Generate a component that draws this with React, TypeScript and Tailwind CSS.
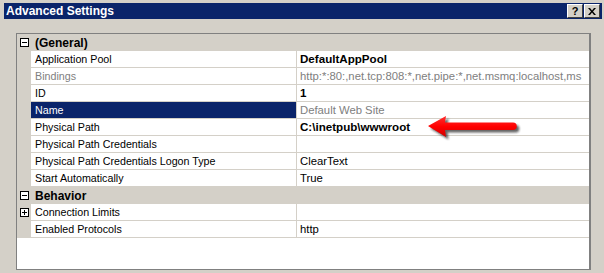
import React from 'react';

type Row = {
    kind: 'cat' | 'prop';
    label: string;
    value?: string;
    bold?: boolean;
    dim?: boolean;
    selected?: boolean;
    expander?: 'minus' | 'plus';
};

const rows: Row[] = [
    { kind: 'cat', label: '(General)', expander: 'minus' },
    { kind: 'prop', label: 'Application Pool', value: 'DefaultAppPool', bold: true },
    { kind: 'prop', label: 'Bindings', value: 'http:*:80:,net.tcp:808:*,net.pipe:*,net.msmq:localhost,ms', dim: true },
    { kind: 'prop', label: 'ID', value: '1', bold: true },
    { kind: 'prop', label: 'Name', value: 'Default Web Site', selected: true },
    { kind: 'prop', label: 'Physical Path', value: 'C:\\inetpub\\wwwroot', bold: true },
    { kind: 'prop', label: 'Physical Path Credentials', value: '' },
    { kind: 'prop', label: 'Physical Path Credentials Logon Type', value: 'ClearText' },
    { kind: 'prop', label: 'Start Automatically', value: 'True' },
    { kind: 'cat', label: 'Behavior', expander: 'minus' },
    { kind: 'prop', label: 'Connection Limits', value: '', expander: 'plus' },
    { kind: 'prop', label: 'Enabled Protocols', value: 'http' },
];

function Expander({ type }: { type: 'minus' | 'plus' }) {
    return (
        <svg width="9" height="9" viewBox="0 0 9 9" className="block">
            <rect x="0.5" y="0.5" width="8" height="8" fill="white" stroke="#000" />
            <line x1="2" y1="4.5" x2="7" y2="4.5" stroke="#000" />
            {type === 'plus' && <line x1="4.5" y1="2" x2="4.5" y2="7" stroke="#000" />}
        </svg>
    );
}

function CaptionButton({ children }: { children: React.ReactNode }) {
    return (
        <div className="w-[16px] h-[14px] bg-[#d4d0c8] border border-t-white border-l-white border-r-[#404040] border-b-[#404040] flex items-center justify-center text-[11px] font-bold text-black leading-none">
            {children}
        </div>
    );
}

export default function App() {
    return (
        <div
            className="relative w-[604px] h-[273px] bg-[#d4d0c8] overflow-hidden text-[11px] text-black"
            style={{ fontFamily: '"Liberation Sans", Arial, sans-serif' }}
        >
            {/* Title bar */}
            <div className="ml-[4px] mr-[2px] mt-[3px] h-[16px] bg-[#0a246a] flex items-center justify-between pl-[2px] pr-[2px]">
                <span className="text-white font-bold text-[12px] leading-none">Advanced Settings</span>
                <div className="flex gap-[1px]">
                    <CaptionButton>?</CaptionButton>
                    <CaptionButton>
                        <svg width="8" height="7" viewBox="0 0 8 7">
                            <path d="M0 0 L2 0 L4 2.5 L6 0 L8 0 L5 3.5 L8 7 L6 7 L4 4.5 L2 7 L0 7 L3 3.5 Z" fill="#000" />
                        </svg>
                    </CaptionButton>
                </div>
            </div>

            {/* Property grid */}
            <div className="ml-[16px] mt-[14px] w-[575px] h-[237px] bg-white border border-[#808080] border-r-2 overflow-hidden">
                {rows.map((r, i) =>
                    r.kind === 'cat' ? (
                        <div key={i} className="flex h-[17px] bg-[#d4d0c8]">
                            <div className="w-[14px] flex items-center justify-center shrink-0">
                                <Expander type={r.expander!} />
                            </div>
                            <div className="pl-[4px] font-bold text-[12px] flex items-center">{r.label}</div>
                        </div>
                    ) : (
                        <div key={i} className="flex h-[17px]">
                            <div className="w-[14px] bg-[#d4d0c8] flex items-center justify-center shrink-0">
                                {r.expander && <Expander type={r.expander} />}
                            </div>
                            <div
                                className={`w-[266px] shrink-0 pl-[4px] flex items-center border-b border-r border-[#d4d0c8] whitespace-nowrap text-[10.7px] ${
                                    r.selected ? 'bg-[#0a246a] text-white' : r.dim ? 'text-[#808080]' : ''
                                }`}
                            >
                                {r.label}
                            </div>
                            <div
                                className={`flex-1 min-w-0 pl-[3px] flex items-center border-b border-[#d4d0c8] whitespace-nowrap overflow-hidden ${
                                    r.bold ? 'font-bold text-[11.6px]' : 'text-[11.3px]'
                                } ${r.dim || r.selected ? 'text-[#808080]' : ''}`}
                            >
                                {r.value}
                            </div>
                        </div>
                    )
                )}
            </div>

            {/* Red arrow annotation */}
            <svg className="absolute left-[420px] top-[110px]" width="110" height="34" viewBox="0 0 110 34">
                <defs>
                    <linearGradient id="arrowRed" x1="0" y1="0" x2="0" y2="1">
                        <stop offset="0" stopColor="#ff3030" />
                        <stop offset="0.5" stopColor="#ff0000" />
                        <stop offset="1" stopColor="#d00000" />
                    </linearGradient>
                    <filter id="arrowShadow" x="-10%" y="-30%" width="130%" height="180%">
                        <feGaussianBlur stdDeviation="1.2" />
                    </filter>
                </defs>
                <path
                    d="M8 16 L26 6 L25 12.5 L93 12.5 A3.75 3.75 0 0 1 93 20 L25 20 L26 27 Z"
                    fill="#202020"
                    opacity="0.7"
                    transform="translate(2.5 2.5)"
                    filter="url(#arrowShadow)"
                />
                <path d="M8 16 L26 6 L25 12.5 L93 12.5 A3.75 3.75 0 0 1 93 20 L25 20 L26 27 Z" fill="url(#arrowRed)" />
            </svg>
        </div>
    );
}
